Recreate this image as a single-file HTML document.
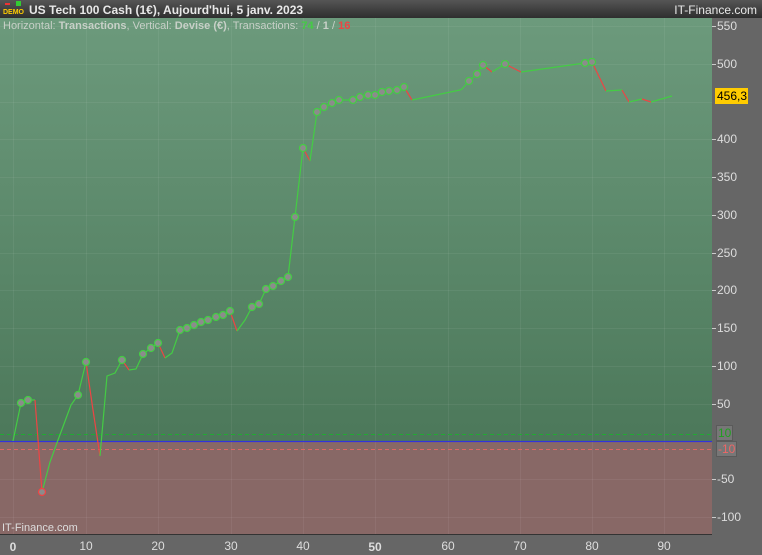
<!DOCTYPE html>
<html><head><meta charset="utf-8"><style>
html,body{margin:0;padding:0;width:762px;height:555px;overflow:hidden;background:#666;font-family:"Liberation Sans",sans-serif}
</style></head><body>
<svg width="762" height="555" xmlns="http://www.w3.org/2000/svg" style="position:absolute;left:0;top:0">
<defs>
<linearGradient id="tb" x1="0" y1="0" x2="0" y2="1"><stop offset="0" stop-color="#555"/><stop offset="1" stop-color="#2e2e2e"/></linearGradient>
<linearGradient id="gg" x1="0" y1="0" x2="0" y2="1"><stop offset="0" stop-color="#6c9a7c"/><stop offset="1" stop-color="#4c785a"/></linearGradient>
</defs>
<rect x="0" y="0" width="762" height="555" fill="#666"/>
<rect x="0" y="0" width="762" height="18" fill="url(#tb)"/>
<rect x="0" y="18" width="712" height="424" fill="url(#gg)"/>
<rect x="0" y="442" width="712" height="92" fill="#886866"/>
<line x1="0" y1="534.5" x2="712" y2="534.5" stroke="#333" stroke-width="1"/>
<g stroke="#ffffff" stroke-opacity="0.06" stroke-width="1">
<line x1="13.5" y1="18" x2="13.5" y2="534"/><line x1="86.5" y1="18" x2="86.5" y2="534"/><line x1="158.5" y1="18" x2="158.5" y2="534"/><line x1="231.5" y1="18" x2="231.5" y2="534"/><line x1="303.5" y1="18" x2="303.5" y2="534"/><line x1="375.5" y1="18" x2="375.5" y2="534"/><line x1="448.5" y1="18" x2="448.5" y2="534"/><line x1="520.5" y1="18" x2="520.5" y2="534"/><line x1="592.5" y1="18" x2="592.5" y2="534"/><line x1="664.5" y1="18" x2="664.5" y2="534"/>
<line x1="0" y1="26.5" x2="712" y2="26.5"/><line x1="0" y1="64.5" x2="712" y2="64.5"/><line x1="0" y1="102.5" x2="712" y2="102.5"/><line x1="0" y1="139.5" x2="712" y2="139.5"/><line x1="0" y1="177.5" x2="712" y2="177.5"/><line x1="0" y1="215.5" x2="712" y2="215.5"/><line x1="0" y1="253.5" x2="712" y2="253.5"/><line x1="0" y1="290.5" x2="712" y2="290.5"/><line x1="0" y1="328.5" x2="712" y2="328.5"/><line x1="0" y1="366.5" x2="712" y2="366.5"/><line x1="0" y1="404.5" x2="712" y2="404.5"/><line x1="0" y1="479.5" x2="712" y2="479.5"/><line x1="0" y1="517.5" x2="712" y2="517.5"/>
</g>
<line x1="0" y1="434.5" x2="712" y2="434.5" stroke="#22aa33" stroke-dasharray="4,3"/>
<line x1="0" y1="449.5" x2="712" y2="449.5" stroke="#dd6666" stroke-dasharray="4,3"/>
<line x1="0" y1="441.5" x2="712" y2="441.5" stroke="#3333dd" stroke-width="1.3"/>
<g fill="none" stroke-width="1.2">
<polyline stroke="#44cc44" points="13,441 21,403 28,400 35,400"/>
<polyline stroke="#ee4444" points="35,400 42,492"/>
<polyline stroke="#44cc44" points="42,492 50,462 58,440 71,405 78,395 86,362"/>
<polyline stroke="#ee4444" points="86,362 93,410 100,456"/>
<polyline stroke="#44cc44" points="100,456 107,376 115,373 122,360"/>
<polyline stroke="#ee4444" points="122,360 129,370"/>
<polyline stroke="#44cc44" points="129,370 136,369 143,354 151,348 158,343"/>
<polyline stroke="#ee4444" points="158,343 165,358"/>
<polyline stroke="#44cc44" points="165,358 172,353 180,330 187,328 194,325 201,322 208,320 216,317 223,315 230,311"/>
<polyline stroke="#ee4444" points="230,311 237,331"/>
<polyline stroke="#44cc44" points="237,331 245,320 252,307 259,304 266,289 273,286 281,281 288,277 295,217 303,148"/>
<polyline stroke="#ee4444" points="303,148 310,161"/>
<polyline stroke="#44cc44" points="310,161 317,112 324,107 332,103 339,100 353,100 360,97 368,95 375,95 382,92 389,91 397,90 404,87"/>
<polyline stroke="#ee4444" points="404,87 412,100"/>
<polyline stroke="#44cc44" points="412,100 460,90 462,89 469,81 477,74 483,65"/>
<polyline stroke="#ee4444" points="483,65 492,72"/>
<polyline stroke="#44cc44" points="492,72 505,64"/>
<polyline stroke="#ee4444" points="505,64 521,72"/>
<polyline stroke="#44cc44" points="521,72 585,63 592,62"/>
<polyline stroke="#ee4444" points="592,62 606,91"/>
<polyline stroke="#44cc44" points="606,91 622,90"/>
<polyline stroke="#ee4444" points="622,90 629,102"/>
<polyline stroke="#44cc44" points="629,102 642,99"/>
<polyline stroke="#ee4444" points="642,99 651,102"/>
<polyline stroke="#44cc44" points="651,102 672,96"/>
</g>
<g fill="#8c8c8c" stroke="#44cc44" stroke-width="1.2">
<circle cx="21" cy="403" r="3.5"/><circle cx="28" cy="400" r="3.5"/><circle cx="78" cy="395" r="3.5"/><circle cx="86" cy="362" r="3.5"/><circle cx="122" cy="360" r="3.5"/><circle cx="143" cy="354" r="3.5"/><circle cx="151" cy="348" r="3.5"/><circle cx="158" cy="343" r="3.5"/>
<circle cx="180" cy="330" r="3.5"/><circle cx="187" cy="328" r="3.5"/><circle cx="194" cy="325" r="3.5"/><circle cx="201" cy="322" r="3.5"/><circle cx="208" cy="320" r="3.5"/><circle cx="216" cy="317" r="3.5"/><circle cx="223" cy="315" r="3.5"/><circle cx="230" cy="311" r="3.5"/>
<circle cx="252" cy="307" r="3.5"/><circle cx="259" cy="304" r="3.5"/><circle cx="266" cy="289" r="3.5"/><circle cx="273" cy="286" r="3.5"/><circle cx="281" cy="281" r="3.5"/><circle cx="288" cy="277" r="3.5"/><circle cx="295" cy="217" r="3.5"/><circle cx="303" cy="148" r="3.5"/>
<circle cx="317" cy="112" r="3.5"/><circle cx="324" cy="107" r="3.5"/><circle cx="332" cy="103" r="3.5"/><circle cx="339" cy="100" r="3.5"/><circle cx="353" cy="100" r="3.5"/><circle cx="360" cy="97" r="3.5"/><circle cx="368" cy="95" r="3.5"/><circle cx="375" cy="95" r="3.5"/><circle cx="382" cy="92" r="3.5"/><circle cx="389" cy="91" r="3.5"/><circle cx="397" cy="90" r="3.5"/><circle cx="404" cy="87" r="3.5"/>
<circle cx="469" cy="81" r="3.5"/><circle cx="477" cy="74" r="3.5"/><circle cx="483" cy="65" r="3.5"/><circle cx="505" cy="64" r="3.5"/><circle cx="585" cy="63" r="3.5"/><circle cx="592" cy="62" r="3.5"/>
<circle cx="42" cy="492" r="3.5" stroke="#ee4444"/>
</g>
<g>
<rect x="5" y="3" width="5" height="2" fill="#e33"/><rect x="16" y="1" width="5" height="5" fill="#3c3"/>
<text x="3" y="14" font-size="7" font-weight="bold" fill="#ffcc00">DEMO</text>
</g>
<text x="29" y="14" font-size="12" font-weight="bold" fill="#e8e8e8">US Tech 100 Cash (1€), Aujourd'hui, 5 janv. 2023</text>
<text x="757" y="14" font-size="12" text-anchor="end" fill="#e8e8e8">IT-Finance.com</text>
<text x="3" y="29" font-size="11" fill="#c8d0c8">Horizontal: <tspan font-weight="bold">Transactions</tspan>, Vertical: <tspan font-weight="bold">Devise (€)</tspan>, Transactions: <tspan fill="#44cc44" font-weight="bold">74</tspan> / <tspan font-weight="bold">1</tspan> / <tspan fill="#ee4444" font-weight="bold">16</tspan></text>
<text x="2" y="531" font-size="11" fill="#ddd">IT-Finance.com</text>
<g font-size="12" fill="#ddd" stroke="none">
<text x="717" y="30">550</text><text x="717" y="68">500</text><text x="717" y="143">400</text><text x="717" y="181">350</text><text x="717" y="219">300</text><text x="717" y="257">250</text><text x="717" y="294">200</text><text x="717" y="332">150</text><text x="717" y="370">100</text><text x="717" y="408">50</text><text x="717" y="483">-50</text><text x="717" y="521">-100</text>
</g>
<g stroke="#ccc"><line x1="712" y1="26.5" x2="716" y2="26.5"/><line x1="712" y1="64.5" x2="716" y2="64.5"/><line x1="712" y1="139.5" x2="716" y2="139.5"/><line x1="712" y1="177.5" x2="716" y2="177.5"/><line x1="712" y1="215.5" x2="716" y2="215.5"/><line x1="712" y1="253.5" x2="716" y2="253.5"/><line x1="712" y1="290.5" x2="716" y2="290.5"/><line x1="712" y1="328.5" x2="716" y2="328.5"/><line x1="712" y1="366.5" x2="716" y2="366.5"/><line x1="712" y1="404.5" x2="716" y2="404.5"/><line x1="712" y1="479.5" x2="716" y2="479.5"/><line x1="712" y1="517.5" x2="716" y2="517.5"/></g>
<rect x="716.5" y="425.5" width="16" height="15" fill="#777" stroke="#5a5a5a"/>
<text x="718" y="437" font-size="12" fill="#1fa01f">10</text>
<rect x="716.5" y="441.5" width="20" height="15" fill="#777" stroke="#5a5a5a"/>
<text x="718" y="453" font-size="12" fill="#ee6666">-10</text>
<rect x="715" y="88" width="33" height="16" fill="#ffcc00"/>
<text x="717" y="100" font-size="12" fill="#000">456,3</text>
<g font-size="12" fill="#ddd" text-anchor="middle">
<text x="13" y="551" font-weight="bold">0</text><text x="86" y="550">10</text><text x="158" y="550">20</text><text x="231" y="550">30</text><text x="303" y="550">40</text><text x="375" y="551" font-weight="bold">50</text><text x="448" y="550">60</text><text x="520" y="550">70</text><text x="592" y="550">80</text><text x="664" y="550">90</text>
</g>
</svg>
</body></html>
